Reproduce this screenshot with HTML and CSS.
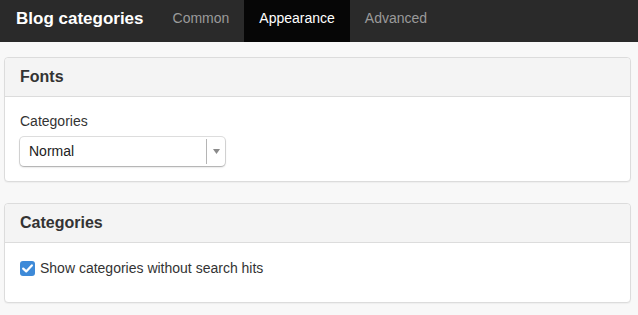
FILE: index.html
```html
<!DOCTYPE html>
<html>
<head>
    <title>Blog categories</title>
    <link rel="stylesheet" href="styles.css">
</head>
<body>
    <div class="navbar">
        <div class="brand">Blog categories</div>
        <a class="tab">Common</a>
        <a class="tab active">Appearance</a>
        <a class="tab">Advanced</a>
    </div>

    <div class="content">
        <div class="panel">
            <div class="panel-heading">Fonts</div>
            <div class="panel-body">
                <label class="field-label">Categories</label>
                <div class="select">
                    <span class="select-value">Normal</span>
                    <span class="select-arrow">
                        <svg width="7" height="5" viewBox="0 0 7 5"><path d="M0 0 L7 0 L3.5 5 Z" fill="#8a8a8a"/></svg>
                    </span>
                </div>
            </div>
        </div>

        <div class="panel">
            <div class="panel-heading">Categories</div>
            <div class="panel-body">
                <label class="check-row">
                    <span class="checkbox">
                        <svg width="11" height="9" viewBox="0 0 11 9"><path d="M1.2 4.6 L4.2 7.4 L9.8 1.4" fill="none" stroke="#fff" stroke-width="2.2" stroke-linecap="round" stroke-linejoin="round"/></svg>
                    </span>
                    Show categories without search hits
                </label>
            </div>
        </div>
    </div>
</body>
</html>
```

FILE: styles.css
```css
* {
    box-sizing: border-box;
}
body {
    margin: 0;
    background-color: #f8f8f8;
    font-family: "Liberation Sans", Arial, sans-serif;
    font-size: 14px;
    color: #333;
}
.navbar {
    display: flex;
    height: 42px;
    background-color: #2a2a2a;
}
.brand {
    padding: 0 14px 0 16px;
    line-height: 37px;
    font-size: 17px;
    font-weight: bold;
    color: #fff;
}
.tab {
    padding: 0 15px;
    line-height: 37px;
    font-size: 14px;
    color: #9a9a9a;
}
.tab.active {
    background-color: #060606;
    color: #fff;
}
.content {
    padding: 15px 7px 0 4px;
}
.panel {
    background-color: #fff;
    border: 1px solid #dcdcdc;
    border-radius: 4px;
    margin-bottom: 21px;
    box-shadow: 0 1px 1px rgba(0, 0, 0, 0.04);
}
.panel-heading {
    background-color: #f4f4f4;
    border-bottom: 1px solid #dcdcdc;
    border-radius: 4px 4px 0 0;
    padding: 10px 15px;
    height: 39px;
    font-size: 16px;
    font-weight: bold;
    line-height: 18px;
    color: #333;
}
.panel-body {
    padding: 14px 15px 15px 15px;
}
.field-label {
    display: block;
    line-height: 20px;
    margin-bottom: 6px;
}
.select {
    display: flex;
    width: 205px;
    height: 29px;
    border-radius: 4px;
    background-color: #fff;
    box-shadow: 0 0 0 1px rgba(0, 0, 0, 0.12), 0 1px 2px rgba(0, 0, 0, 0.25);
}
.select-value {
    flex: 1;
    padding-left: 9px;
    line-height: 29px;
    color: #222;
}
.select-arrow {
    width: 19px;
    display: flex;
    align-items: center;
    justify-content: center;
    border-left: 1px solid #b5b5b5;
    margin: 2px 0;
}
.check-row {
    display: flex;
    align-items: center;
    line-height: 20px;
    margin: 1px 0 9px 0;
}
.checkbox {
    display: flex;
    align-items: center;
    justify-content: center;
    width: 15px;
    height: 15px;
    border-radius: 3px;
    background-color: #3e8ad8;
    margin-right: 5px;
}
```
